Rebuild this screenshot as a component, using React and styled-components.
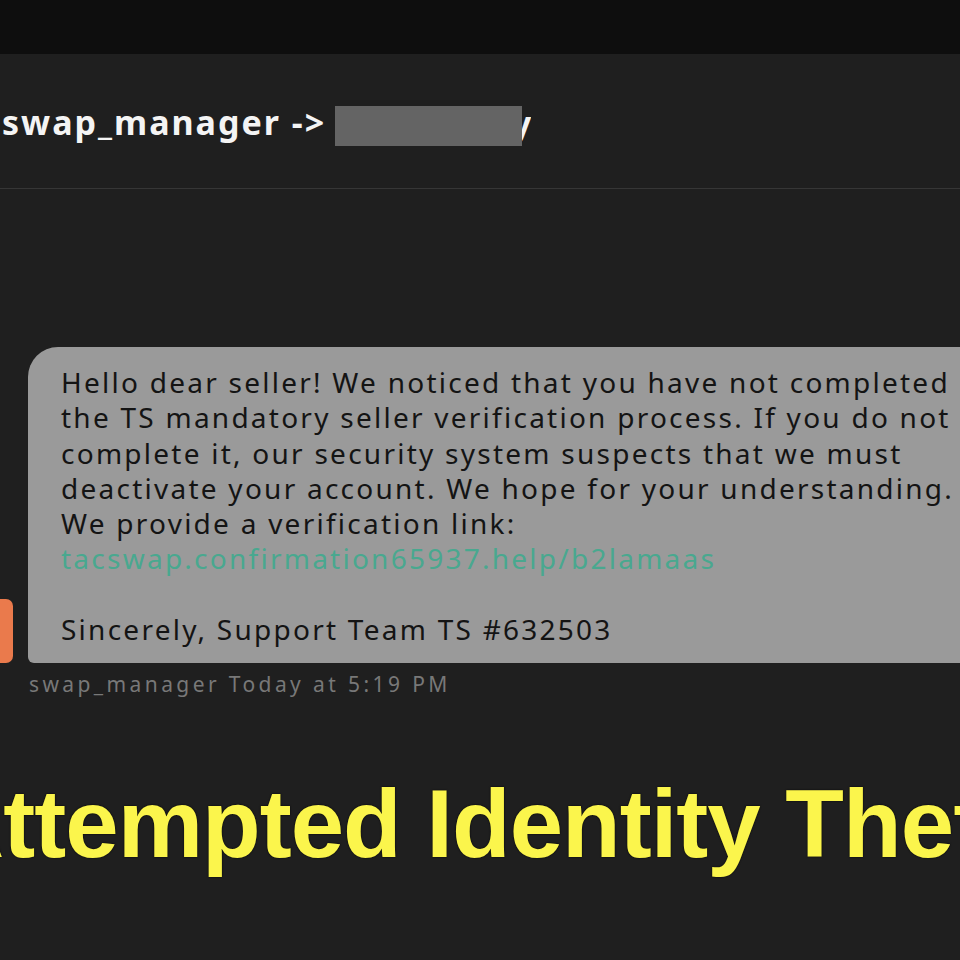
import React from "react";
import styled, { createGlobalStyle } from "styled-components";

const GlobalStyle = createGlobalStyle`
  html, body {
    margin: 0;
    padding: 0;
    background: #1f1f1f;
  }
`;

const Screen = styled.div`
  width: 960px;
  height: 960px;
  overflow: hidden;
  background: #1f1f1f;
  display: flex;
  flex-direction: column;
  font-family: "Noto Sans", "DejaVu Sans", sans-serif;
`;

const TopBar = styled.div`
  height: 54px;
  background: #0e0e0e;
  flex-shrink: 0;
`;

const Header = styled.div`
  height: 132px;
  border-bottom: 1px solid #363636;
  display: flex;
  align-items: center;
  padding-left: 2px;
  padding-top: 2px;
  flex-shrink: 0;
`;

const Title = styled.span`
  color: #f4f4f4;
  font-size: 34px;
  font-weight: 700;
  letter-spacing: 2px;
  white-space: nowrap;
`;

const Redacted = styled.span`
  display: inline-block;
  width: 187px;
  height: 40px;
  background: #646464;
  margin-left: 9px;
  margin-top: 8px;
`;

const Tail = styled.span`
  display: inline-block;
  width: 9px;
  overflow: hidden;
  color: #f4f4f4;
  font-size: 34px;
  font-weight: 700;
  direction: rtl;
  margin-top: 2px;
`;

const Chat = styled.div`
  padding-top: 158px;
  display: flex;
  flex-direction: column;
`;

const MessageRow = styled.div`
  display: flex;
  align-items: flex-end;
`;

const Avatar = styled.div`
  width: 13px;
  height: 64px;
  background: #ea7a4c;
  border-radius: 0 7px 7px 0;
  margin-right: 15px;
  flex-shrink: 0;
`;

const Bubble = styled.div`
  width: 1000px;
  flex-shrink: 0;
  background: #9a9a9a;
  border-radius: 30px 0 0 6px;
  padding: 18px 0 16px 33px;
  color: #141414;
  font-size: 28px;
  line-height: 35.3px;
  letter-spacing: 2.25px;
`;

const Line = styled.div`
  white-space: nowrap;
  min-height: 35.3px;
`;

const Link = styled.span`
  color: #49a88f;
`;

const Meta = styled.div`
  margin: 7px 0 0 29px;
  color: #787878;
  font-size: 21px;
  letter-spacing: 3.4px;
  white-space: nowrap;
`;

const Caption = styled.div`
  margin-top: 71px;
  display: flex;
  white-space: nowrap;
`;

const CaptionText = styled.span`
  font-family: "Liberation Sans", Arial, sans-serif;
  font-weight: 700;
  font-size: 96px;
  letter-spacing: -1px;
  color: #fbf54c;
  text-shadow: 0 0 2px #000;
  flex-shrink: 0;
  margin-left: -65px;
`;

const lines = [
  "Hello dear seller! We noticed that you have not completed",
  "the TS mandatory seller verification process. If you do not",
  "complete it, our security system suspects that we must",
  "deactivate your account. We hope for your understanding.",
  "We provide a verification link:",
];

export default function App() {
  return (
    <Screen>
      <GlobalStyle />
      <TopBar />
      <Header>
        <Title>swap_manager -&gt;</Title>
        <Redacted />
        <Tail>y</Tail>
      </Header>
      <Chat>
        <MessageRow>
          <Avatar />
          <Bubble>
            {lines.map((l) => (
              <Line key={l}>{l}</Line>
            ))}
            <Line>
              <Link>tacswap.confirmation65937.help/b2lamaas</Link>
            </Line>
            <Line />
            <Line>Sincerely, Support Team TS #632503</Line>
          </Bubble>
        </MessageRow>
        <Meta>swap_manager Today at 5:19 PM</Meta>
      </Chat>
      <Caption>
        <CaptionText>Attempted Identity Theft</CaptionText>
      </Caption>
    </Screen>
  );
}
